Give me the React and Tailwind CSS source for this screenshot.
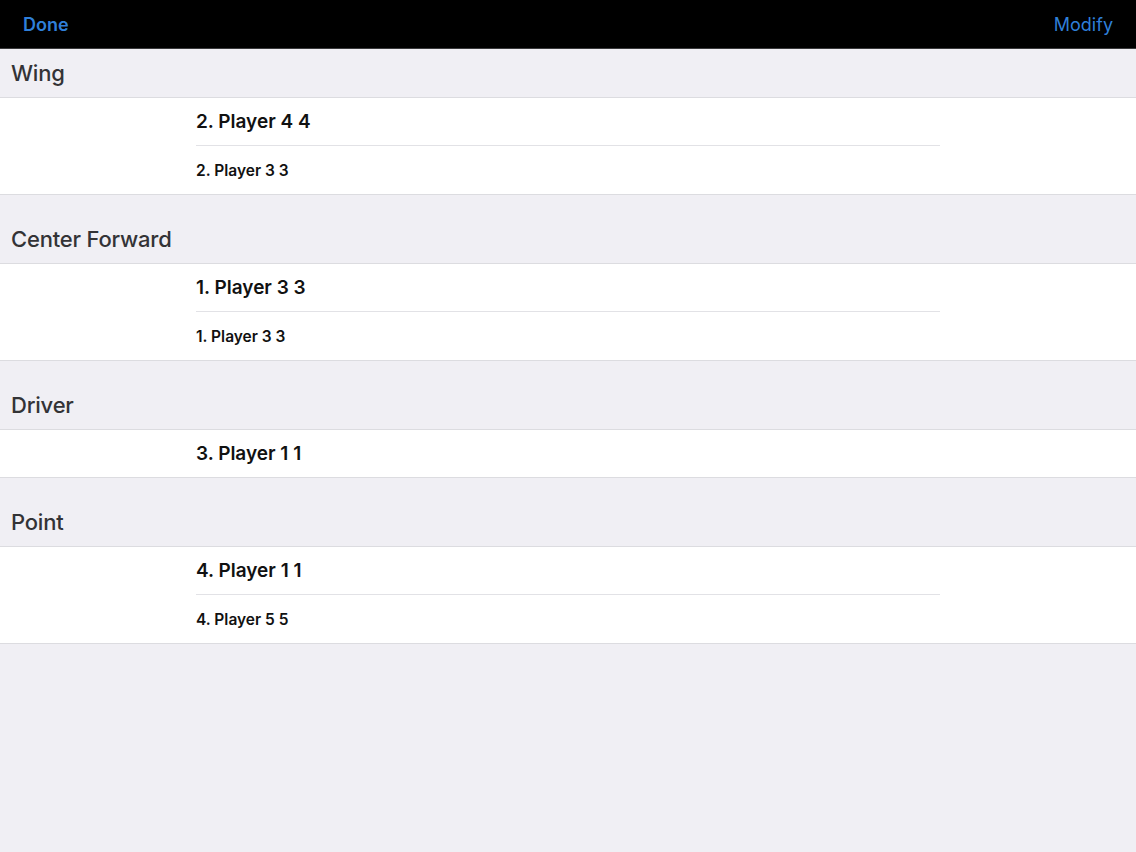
import React from 'react';

const sections = [
  { title: 'Wing', rows: ['2. Player 4 4', '2. Player 3 3'] },
  { title: 'Center Forward', rows: ['1. Player 3 3', '1. Player 3 3'] },
  { title: 'Driver', rows: ['3. Player 1 1'] },
  { title: 'Point', rows: ['4. Player 1 1', '4. Player 5 5'] },
];

const Section = ({ section, first }) => {
  const single = section.rows.length === 1;
  return (
    <section>
      <div className={`flex items-center px-[11px] h-[49px] ${first ? '' : 'mt-[20px]'} border-b border-[#dcdce0]`}>
        <h2 className="text-[22px] font-medium text-[#333336] tracking-[-0.2px]">{section.title}</h2>
      </div>
      <div className="bg-white border-b border-[#dcdce0]">
        {section.rows.map((row, i) => (
          <div key={i} className="pl-[196px]">
            <div
              className={`w-[744px] ${single ? 'h-[47px]' : 'h-[48px]'} flex items-center ${i < section.rows.length - 1 ? 'border-b border-[#e2e2e6]' : ''}`}
            >
              {i === 0 ? (
                <span className="text-[19px] font-semibold text-[#111] pt-[1px]">{row}</span>
              ) : (
                <span className="text-[15.5px] font-semibold text-[#111] pt-[1px]">{row}</span>
              )}
            </div>
          </div>
        ))}
      </div>
    </section>
  );
};

export default function App() {
  return (
    <div className="min-h-[852px] bg-[#f0eff4] font-['Inter',sans-serif]">
      <header className="h-[49px] bg-black border-b border-[#3a3a3c] flex items-center justify-between px-[23px]">
        <button className="text-[18px] font-semibold text-[#2f7fd9]">Done</button>
        <button className="text-[18px] text-[#2f7fd9]">Modify</button>
      </header>
      {sections.map((s, i) => (
        <Section key={s.title} section={s} first={i === 0} />
      ))}
    </div>
  );
}
